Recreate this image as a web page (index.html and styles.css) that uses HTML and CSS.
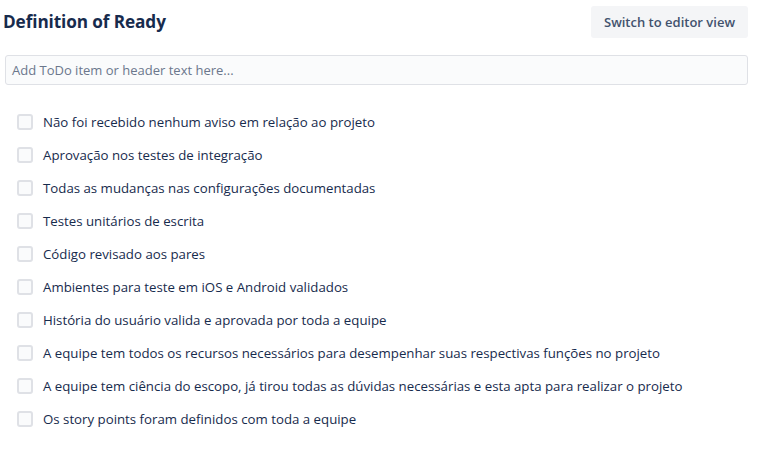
FILE: index.html
```html
<!DOCTYPE html>
<html lang="pt">
<head>
<meta charset="utf-8">
<link rel="stylesheet" href="styles.css">
</head>
<body>
<div class="page">
  <div class="header">
    <h1 class="title">Definition of Ready</h1>
    <button class="switch-btn">Switch to editor view</button>
  </div>
  <div class="add-input">Add ToDo item or header text here...</div>
  <ul class="todo-list">
    <li class="todo"><span class="box"></span><span class="label">Não foi recebido nenhum aviso em relação ao projeto</span></li>
    <li class="todo"><span class="box"></span><span class="label">Aprovação nos testes de integração</span></li>
    <li class="todo"><span class="box"></span><span class="label">Todas as mudanças nas configurações documentadas</span></li>
    <li class="todo"><span class="box"></span><span class="label">Testes unitários de escrita</span></li>
    <li class="todo"><span class="box"></span><span class="label">Código revisado aos pares</span></li>
    <li class="todo"><span class="box"></span><span class="label">Ambientes para teste em iOS e Android validados</span></li>
    <li class="todo"><span class="box"></span><span class="label">História do usuário valida e aprovada por toda a equipe</span></li>
    <li class="todo"><span class="box"></span><span class="label">A equipe tem todos os recursos necessários para desempenhar suas respectivas funções no projeto</span></li>
    <li class="todo"><span class="box"></span><span class="label">A equipe tem ciência do escopo, já tirou todas as dúvidas necessárias e esta apta para realizar o projeto</span></li>
    <li class="todo"><span class="box"></span><span class="label">Os story points foram definidos com toda a equipe</span></li>
  </ul>
</div>
</body>
</html>
```

FILE: styles.css
```css
html, body {
  margin: 0;
  padding: 0;
  background: #ffffff;
}
body {
  font-family: "Open Sans", "Noto Sans", "Liberation Sans", sans-serif;
  color: #172B4D;
}
.page {
  width: 768px;
  padding: 6px 20px 0 3px;
  box-sizing: border-box;
}
.header {
  display: flex;
  justify-content: space-between;
  align-items: center;
  height: 32px;
}
.title {
  margin: 0;
  font-size: 17.2px;
  font-weight: 700;
  color: #172B4D;
  letter-spacing: -0.1px;
  position: relative;
  top: -1px;
}
.switch-btn {
  font-family: inherit;
  background: #F4F5F7;
  border: none;
  border-radius: 3px;
  color: #42526E;
  font-size: 13px;
  font-weight: 600;
  height: 32px;
  padding: 0 12px;
  width: 157px;
}
.add-input {
  margin: 17px 0 0 2px;
  height: 30px;
  box-sizing: border-box;
  border: 1px solid #DFE1E6;
  border-radius: 3px;
  background: #FAFBFC;
  color: #6B778C;
  font-size: 13px;
  padding: 0 6px;
  display: flex;
  align-items: center;
}
.todo-list {
  list-style: none;
  margin: 20px 0 0 0;
  padding: 0 0 0 14px;
}
.todo {
  display: flex;
  align-items: center;
  height: 33px;
}
.box {
  width: 16px;
  height: 16px;
  box-sizing: border-box;
  border: 2px solid #DFE1E6;
  border-radius: 3px;
  background: #FAFBFC;
  margin-right: 10px;
  flex: none;
}
.label {
  font-size: 13.25px;
  color: #172B4D;
}
```
